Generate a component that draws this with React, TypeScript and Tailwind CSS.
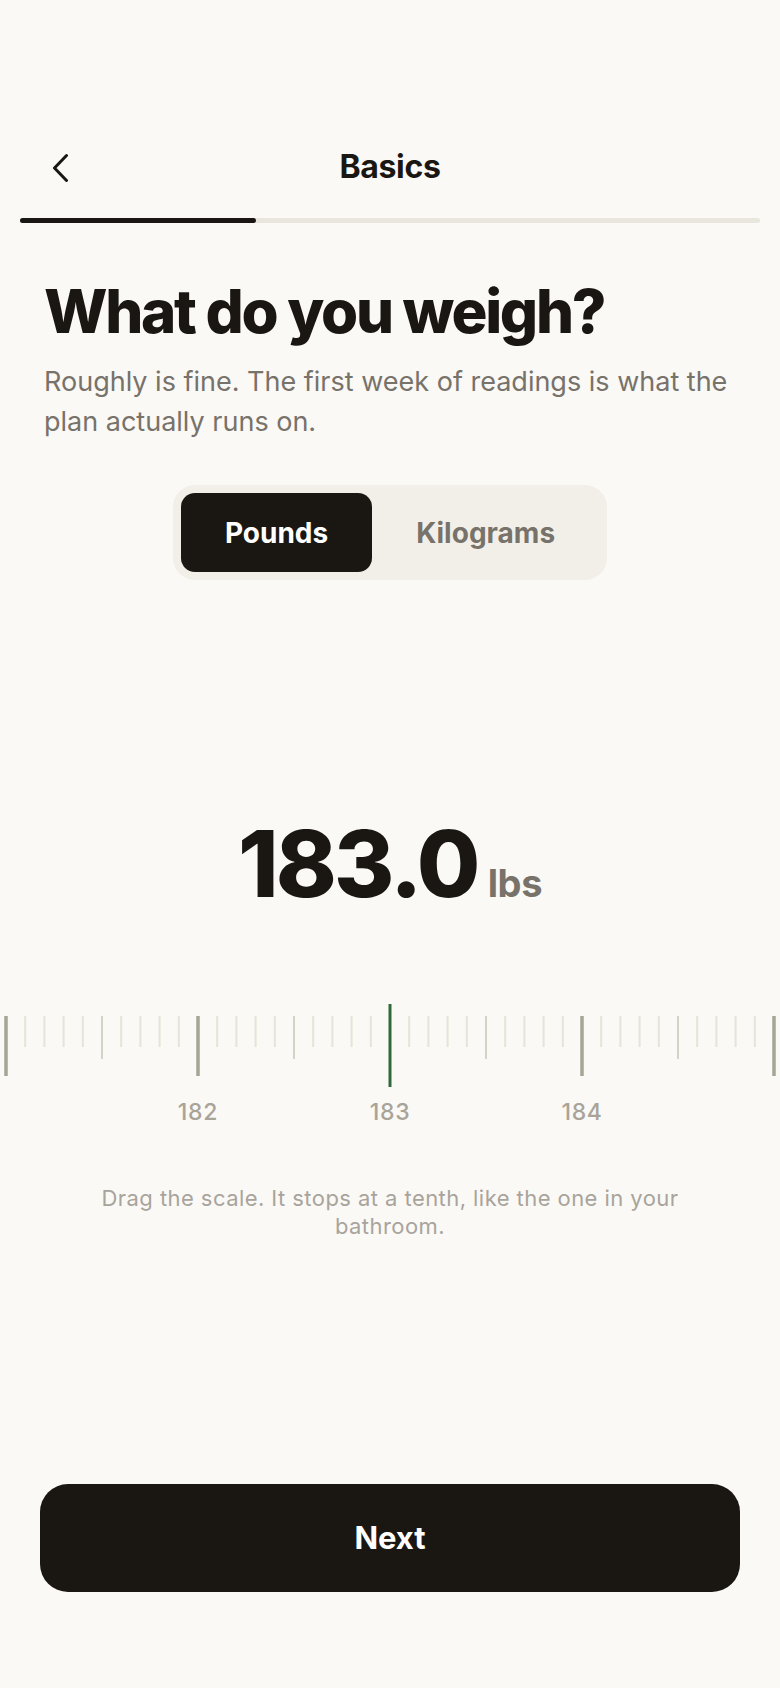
import React from "react";

const ticks = Array.from({ length: 41 }, (_, i) => i - 20);

function Ruler() {
  return (
    <svg width="780" height="90" viewBox="0 0 780 90" className="block">
      {ticks.map((k) => {
        const x = 390 + k * 19.2;
        if (k === 0) {
          return <line key={k} x1={x} x2={x} y1={4} y2={87} stroke="#2e6a3c" strokeWidth={3} />;
        }
        const major = k % 10 === 0;
        const half = !major && k % 5 === 0;
        if (major) {
          return <line key={k} x1={x} x2={x} y1={16} y2={76} stroke="#a7a495" strokeWidth={3.5} />;
        }
        if (half) {
          return <line key={k} x1={x} x2={x} y1={16} y2={59} stroke="#d5d2c5" strokeWidth={2} />;
        }
        return <line key={k} x1={x} x2={x} y1={16} y2={47} stroke="#e6e3d8" strokeWidth={2} />;
      })}
    </svg>
  );
}

export default function App() {
  return (
    <div className="min-h-[1688px] w-[780px] bg-[#fbf9f6] flex flex-col font-['Inter',sans-serif] text-[#1a1713]">
      {/* Header */}
      <div className="pt-[139px] h-[195px] grid grid-cols-[1fr_auto_1fr] items-center">
        <button className="pl-[51px] flex items-center">
          <svg width="20" height="30" viewBox="0 0 20 30" fill="none">
            <path d="M15.5 3.5 L3.5 16 L15.5 28.5" stroke="#1a1713" strokeWidth="3" strokeLinecap="round" strokeLinejoin="round" />
          </svg>
        </button>
        <div className="text-[32px] font-bold tracking-[-0.01em] leading-none">Basics</div>
        <div />
      </div>

      {/* Progress */}
      <div className="mt-[23px] mx-5 h-[5px] rounded-full bg-[#e9e6dd] flex">
        <div className="w-[236px] h-full rounded-full bg-[#1a1713]" />
      </div>

      {/* Question */}
      <div className="px-[44px] mt-[55px]">
        <h1 className="text-[60px] font-extrabold leading-[1.1] tracking-[-0.038em]">What do you weigh?</h1>
        <p className="mt-[18px] text-[27px] leading-[40px] text-[#77726a]">
          Roughly is fine. The first week of readings is what the plan actually runs on.
        </p>
      </div>

      {/* Unit toggle */}
      <div className="mt-[43px] flex justify-center">
        <div className="flex p-2 rounded-[22px] bg-[#f2efe9]">
          <button className="h-[79px] px-[44px] rounded-[14px] bg-[#1a1713] text-white text-[28px] font-bold">
            Pounds
          </button>
          <button className="h-[79px] px-[44px] rounded-[14px] text-[#78736a] text-[28px] font-bold">
            Kilograms
          </button>
        </div>
      </div>

      {/* Value */}
      <div className="mt-[238px] flex justify-center items-baseline gap-[10px]">
        <span className="text-[92px] font-extrabold leading-none tracking-[-0.03em]">183.0</span>
        <span className="text-[38px] font-bold leading-none text-[#78736a] tracking-[-0.01em]">lbs</span>
      </div>

      {/* Scale */}
      <div className="mt-[90px]">
        <Ruler />
        <div className="mt-2 flex justify-center text-[23px] leading-[28px] font-medium tracking-[0.03em] text-[#a8a49a]">
          <span className="w-[192px] text-center">182</span>
          <span className="w-[192px] text-center">183</span>
          <span className="w-[192px] text-center">184</span>
        </div>
      </div>

      <p className="mt-[58px] px-[70px] text-center text-[22px] leading-[28px] tracking-[0.02em] text-[#a8a49c]">
        Drag the scale. It stops at a tenth, like the one in your bathroom.
      </p>

      {/* Next */}
      <div className="mt-auto mb-[96px] px-10">
        <button className="w-full h-[108px] rounded-[28px] bg-[#1a1713] text-white text-[31px] font-bold">
          Next
        </button>
      </div>
    </div>
  );
}
